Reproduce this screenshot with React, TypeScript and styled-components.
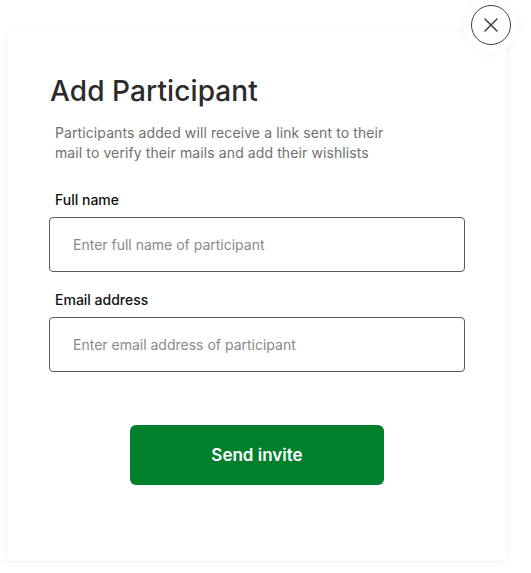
import React from "react";
import styled, { createGlobalStyle } from "styled-components";

const Global = createGlobalStyle`
  html, body { margin: 0; padding: 0; background: #ffffff; }
  * { box-sizing: border-box; }
  body { font-family: Inter, "Noto Sans", sans-serif; }
`;

const Page = styled.div`
  position: relative;
  width: 531px;
  height: 573px;
  padding: 30px 0 0 8px;
`;

const Card = styled.div`
  width: 499px;
  height: 531px;
  background: #ffffff;
  border-radius: 3px;
  box-shadow: 0 2px 8px rgba(0, 0, 0, 0.06), 0 0 2px rgba(0, 0, 0, 0.04);
  padding: 44px 0 0 41px;
  display: flex;
  flex-direction: column;
`;

const Title = styled.h1`
  margin: 0 0 0 1px;
  font-size: 28px;
  line-height: 34px;
  font-weight: 500;
  color: #2b2b2b;
  letter-spacing: 0.1px;
`;

const Description = styled.p`
  margin: 15px 0 0 6px;
  width: 345px;
  font-size: 14px;
  line-height: 20px;
  color: #6f6f6f;
  letter-spacing: 0.1px;
`;

const Field = styled.div`
  display: flex;
  flex-direction: column;
  width: 416px;
  margin-top: ${(p: { $top: number }) => p.$top}px;
`;

const Label = styled.label`
  margin-left: 6px;
  font-size: 14px;
  line-height: 18px;
  font-weight: 500;
  color: #111;
  margin-bottom: 8px;
`;

const Input = styled.input`
  width: 416px;
  height: 55px;
  border: 1px solid #5a5a5a;
  border-radius: 4px;
  padding: 0 0 0 23px;
  font-family: inherit;
  font-size: 14px;
  color: #222;
  outline: none;
  &::placeholder { color: #8a8a8a; }
`;

const ButtonRow = styled.div`
  width: 416px;
  display: flex;
  justify-content: center;
  margin-top: 53px;
`;

const SendButton = styled.button`
  width: 254px;
  height: 60px;
  border: none;
  border-radius: 6px;
  background: #007f2d;
  color: #ffffff;
  font-family: inherit;
  font-size: 17px;
  font-weight: 600;
  cursor: pointer;
`;

const CloseWrap = styled.div`
  position: absolute;
  top: -2px;
  left: 464px;
  width: 54px;
  height: 54px;
  border-radius: 50%;
  background: #ffffff;
  box-shadow: 0 2px 8px rgba(0, 0, 0, 0.04);
  display: flex;
  align-items: center;
  justify-content: center;
`;

const CloseButton = styled.button`
  width: 40px;
  height: 40px;
  border-radius: 50%;
  border: 1.5px solid #3f3f3f;
  background: #ffffff;
  display: flex;
  align-items: center;
  justify-content: center;
  padding: 0;
  cursor: pointer;
`;

export default function App() {
  return (
    <>
      <Global />
      <Page>
        <Card>
          <Title>Add Participant</Title>
          <Description>
            Participants added will receive a link sent to their mail to verify their mails and add their wishlists
          </Description>
          <Field $top={28}>
            <Label>Full name</Label>
            <Input placeholder="Enter full name of participant" />
          </Field>
          <Field $top={19}>
            <Label>Email address</Label>
            <Input placeholder="Enter email address of participant" />
          </Field>
          <ButtonRow>
            <SendButton>Send invite</SendButton>
          </ButtonRow>
        </Card>
        <CloseWrap>
          <CloseButton aria-label="Close">
            <svg width="16" height="16" viewBox="0 0 16 16">
              <path d="M2 2 L14 14 M14 2 L2 14" stroke="#3f3f3f" strokeWidth="1.5" strokeLinecap="round" />
            </svg>
          </CloseButton>
        </CloseWrap>
      </Page>
    </>
  );
}
